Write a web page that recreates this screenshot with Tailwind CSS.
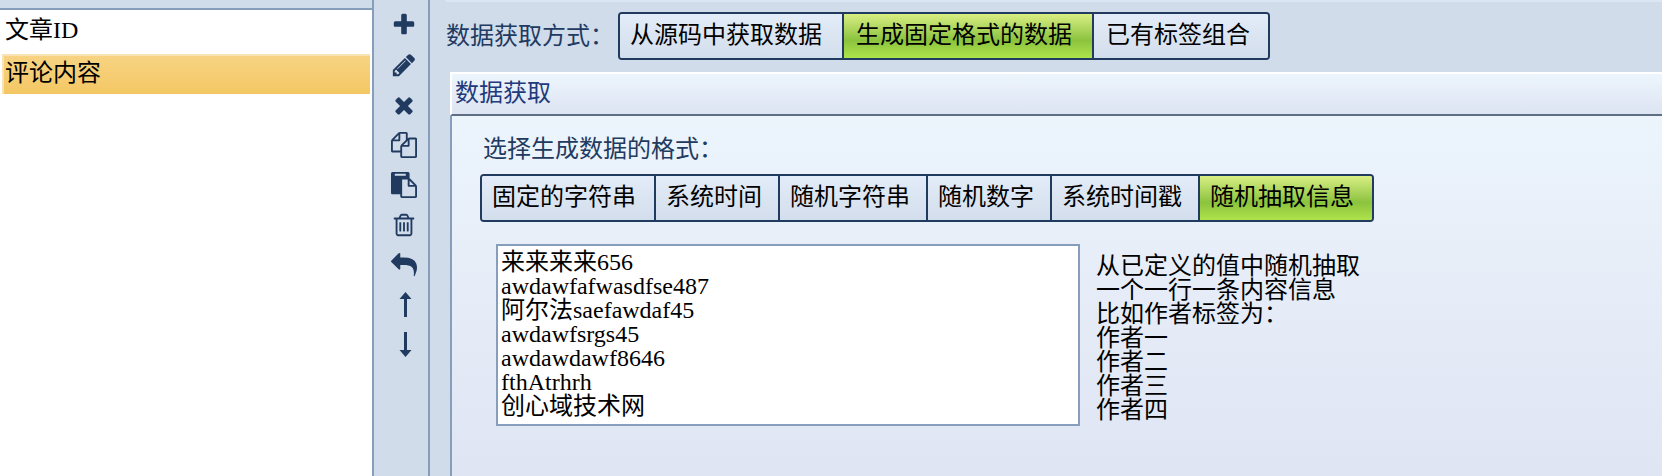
<!DOCTYPE html>
<html lang="zh-CN">
<head>
    <meta charset="UTF-8">
    <meta name="viewport" content="width=device-width, initial-scale=1.0">
    <title>标签编辑</title>
    <script src="https://cdn.jsdelivr.net/npm/@tailwindcss/browser@4"></script>
</head>
<body class="flex h-screen overflow-hidden bg-[#d1dceb] font-['Liberation_Serif','Noto_Sans_CJK_SC',serif] text-[24px] leading-6 text-black">

    <!-- Tag list -->
    <aside class="flex w-[374px] shrink-0 flex-col border-r-2 border-[#869dbc] pt-2">
        <ul class="flex-1 border-t-2 border-[#869dbc] bg-white">
            <li class="h-11"><a href="#" class="flex h-10 items-center pl-[5px]">文章ID</a></li>
            <li class="pr-0.5 pl-0.5"><a href="#" class="flex h-10 items-center border-t-2 border-l-2 border-[#f9e3b4] bg-linear-to-b from-[#f7d382] to-[#f3c763] pb-1 pl-px">评论内容</a></li>
        </ul>
    </aside>

    <!-- Toolbar -->
    <nav class="w-14 shrink-0 border-r-2 border-[#869dbc] pt-[5px] pl-[17px] text-[#213a5f]">
        <button type="button" aria-label="添加" class="flex h-10 items-center">
            <svg class="size-[26px]" viewBox="0 0 1792 1792" fill="currentColor"><path d="M1600 736v192q0 40-28 68t-68 28h-416v416q0 40-28 68t-68 28h-192q-40 0-68-28t-28-68v-416h-416q-40 0-68-28t-28-68v-192q0-40 28-68t68-28h416v-416q0-40 28-68t68-28h192q40 0 68 28t28 68v416h416q40 0 68 28t28 68z"/></svg>
        </button>
        <button type="button" aria-label="编辑" class="flex h-10 items-center">
            <svg class="size-[26px]" viewBox="0 0 1792 1792" fill="currentColor"><path d="M491 1536l91-91-235-235-91 91v107h128v128h107zm523-928q0-22-22-22-10 0-17 7l-542 542q-7 7-7 17 0 22 22 22 10 0 17-7l542-542q7-7 7-17zm-54-192l416 416-832 832h-416v-416zm683 96q0 53-37 90l-166 166-416-416 166-165q36-38 90-38 53 0 91 38l235 234q37 39 37 91z"/></svg>
        </button>
        <button type="button" aria-label="删除" class="flex h-10 items-center">
            <svg class="size-[26px]" viewBox="0 0 1792 1792" fill="currentColor"><path d="M1490 1322q0 40-28 68l-136 136q-28 28-68 28t-68-28l-294-294-294 294q-28 28-68 28t-68-28l-136-136q-28-28-28-68t28-68l294-294-294-294q-28-28-28-68t28-68l136-136q28-28 68-28t68 28l294 294 294-294q28-28 68-28t68 28l136 136q28 28 28 68t-28 68l-294 294 294 294q28 28 28 68z"/></svg>
        </button>
        <button type="button" aria-label="复制" class="flex h-10 items-center">
            <svg class="size-[26px]" viewBox="0 0 1792 1792" fill="currentColor"><path d="M1696 384q40 0 68 28t28 68v1216q0 40-28 68t-68 28h-960q-40 0-68-28t-28-68v-288h-544q-40 0-68-28t-28-68v-672q0-40 20-88t48-76l408-408q28-28 76-48t88-20h416q40 0 68 28t28 68v328q68-40 128-40h416zm-544 213l-299 299h299v-299zm-640-384l-299 299h299v-299zm196 647l316-316v-416h-384v416q0 40-28 68t-68 28h-416v640h512v-256q0-40 20-88t48-76zm956 804v-1152h-384v416q0 40-28 68t-68 28h-416v640h896z"/></svg>
        </button>
        <button type="button" aria-label="粘贴" class="flex h-10 items-center">
            <svg class="size-[26px]" viewBox="0 0 1792 1792" fill="currentColor"><path d="M768 1664h896v-640h-416q-40 0-68-28t-28-68v-416h-384v1152zm256-1440v-64q0-13-9.5-22.5t-22.5-9.5h-704q-13 0-22.5 9.5t-9.5 22.5v64q0 13 9.5 22.5t22.5 9.5h704q13 0 22.5-9.5t9.5-22.5zm256 672h299l-299-299v299zm512 128v672q0 40-28 68t-68 28h-960q-40 0-68-28t-28-68v-160h-544q-40 0-68-28t-28-68v-1344q0-40 28-68t68-28h1088q40 0 68 28t28 68v328q21 13 36 28l408 408q28 28 48 76t20 88z"/></svg>
        </button>
        <button type="button" aria-label="清空" class="flex h-10 items-center">
            <svg class="size-[26px]" viewBox="0 0 1792 1792" fill="currentColor"><path d="M704 736v576q0 14-9 23t-23 9h-64q-14 0-23-9t-9-23v-576q0-14 9-23t23-9h64q14 0 23 9t9 23zm256 0v576q0 14-9 23t-23 9h-64q-14 0-23-9t-9-23v-576q0-14 9-23t23-9h64q14 0 23 9t9 23zm256 0v576q0 14-9 23t-23 9h-64q-14 0-23-9t-9-23v-576q0-14 9-23t23-9h64q14 0 23 9t9 23zm128 724v-948h-896v948q0 22 7 40.5t14.5 27 10.5 8.5h832q3 0 10.5-8.5t14.5-27 7-40.5zm-672-1076h448l-48-117q-7-9-17-11h-317q-10 2-17 11zm928 32v64q0 14-9 23t-23 9h-96v948q0 83-47 143.5t-113 60.5h-832q-66 0-113-58.5t-47-141.5v-952h-96q-14 0-23-9t-9-23v-64q0-14 9-23t23-9h309l70-167q15-37 54-63t79-26h320q40 0 79 26t54 63l70 167h309q14 0 23 9t9 23z"/></svg>
        </button>
        <button type="button" aria-label="撤销" class="flex h-10 items-center">
            <svg class="size-[26px]" viewBox="0 0 1792 1792" fill="currentColor"><path d="M1792 1120q0 166-127 451-3 7-10.5 24t-13.5 30-13 22q-12 17-28 17-15 0-23.5-10t-8.5-25q0-9 2.5-26.5t2.5-23.5q5-68 5-123 0-101-17.5-181t-48.5-138.5-80-101-105.5-69.5-133-42.5-154-21.5-175.5-6h-224v256q0 26-19 45t-45 19-45-19l-512-512q-19-19-19-45t19-45l512-512q19-19 45-19t45 19 19 45v256h224q713 0 875 403 53 134 53 333z"/></svg>
        </button>
        <button type="button" aria-label="上移" class="flex h-10 items-center">
            <svg class="size-[26px]" viewBox="0 0 26 26" fill="currentColor"><path d="M14.500 0L20.500 7H16V25H13V7H8.500z"/></svg>
        </button>
        <button type="button" aria-label="下移" class="flex h-10 items-center">
            <svg class="size-[26px]" viewBox="0 0 26 26" fill="currentColor"><path d="M14.500 25L20.500 18H16V0H13V18H8.500z"/></svg>
        </button>
    </nav>

    <main class="flex min-w-0 flex-1 flex-col pl-4">
        <div class="flex items-center border-t-2 border-[#dce6f2] pt-[10px] pb-3">
            <span id="source" class="w-[172px] whitespace-nowrap text-[#213a5f]">数据获取方式：</span>
            <div role="group" aria-labelledby="source" class="flex h-12 divide-x-2 divide-[#213a5f] overflow-hidden rounded-[4px] border-2 border-[#213a5f] whitespace-nowrap">
                <button type="button" class="bg-linear-to-b from-[#e3ecf8] to-[#d3deec] pr-5 pb-0.5 pl-[10px]">从源码中获取数据</button>
                <button type="button" aria-pressed="true" class="bg-linear-to-b from-[#d9ee82] via-[#8bc33d] via-60% to-[#afe34c] pr-5 pb-0.5 pl-3">生成固定格式的数据</button>
                <button type="button" class="bg-linear-to-b from-[#e3ecf8] to-[#d3deec] pr-[18px] pb-0.5 pl-3">已有标签组合</button>
            </div>
        </div>

        <section class="ml-1 flex flex-1 flex-col">
            <h2 class="h-11 border-t-2 border-b-2 border-l-2 border-t-white border-b-[#5f6e83] border-l-white bg-linear-to-b from-[#edf5fd] to-[#dde4f2] pt-[7px] pl-[3px] text-[#213a7b]">数据获取</h2>
            <div class="flex-1 border-l-2 border-[#869dbc] bg-linear-to-b from-[#ecf4fc] to-[#dfe5f3] pt-[21px] pl-7">
                <p id="format" class="pl-[3px] text-[#213a5f]">选择生成数据的格式：</p>
                <div role="group" aria-labelledby="format" class="mt-[13px] flex h-12 w-fit divide-x-2 divide-[#213a5f] overflow-hidden rounded-[4px] border-2 border-[#213a5f] whitespace-nowrap">
                    <button type="button" class="bg-linear-to-b from-[#e3ecf8] to-[#d3deec] pr-[18px] pb-0.5 pl-[10px]">固定的字符串</button>
                    <button type="button" class="bg-linear-to-b from-[#e3ecf8] to-[#d3deec] pr-4 pb-0.5 pl-[10px]">系统时间</button>
                    <button type="button" class="bg-linear-to-b from-[#e3ecf8] to-[#d3deec] pr-4 pb-0.5 pl-[10px]">随机字符串</button>
                    <button type="button" class="bg-linear-to-b from-[#e3ecf8] to-[#d3deec] pr-4 pb-0.5 pl-[10px]">随机数字</button>
                    <button type="button" class="bg-linear-to-b from-[#e3ecf8] to-[#d3deec] pr-4 pb-0.5 pl-[10px]">系统时间戳</button>
                    <button type="button" aria-pressed="true" class="bg-linear-to-b from-[#d9ee82] via-[#8bc33d] via-60% to-[#afe34c] pr-[18px] pb-0.5 pl-[10px]">随机抽取信息</button>
                </div>
                <div class="mt-[22px] flex gap-4 pl-4">
                    <textarea id="values" aria-label="随机抽取的值" class="h-[182px] w-[584px] resize-none overflow-hidden border-2 border-[#869dbc] bg-white px-[3px] py-1 leading-6">来来来来656
awdawfafwasdfse487
阿尔法saefawdaf45
awdawfsrgs45
awdawdawf8646
fthAtrhrh
创心域技术网</textarea>
                    <label for="values" class="pt-[10px] whitespace-nowrap">从已定义的值中随机抽取<br>一个一行一条内容信息<br>比如作者标签为：<br>作者一<br>作者二<br>作者三<br>作者四</label>
                </div>
            </div>
        </section>
    </main>
</body>
</html>
